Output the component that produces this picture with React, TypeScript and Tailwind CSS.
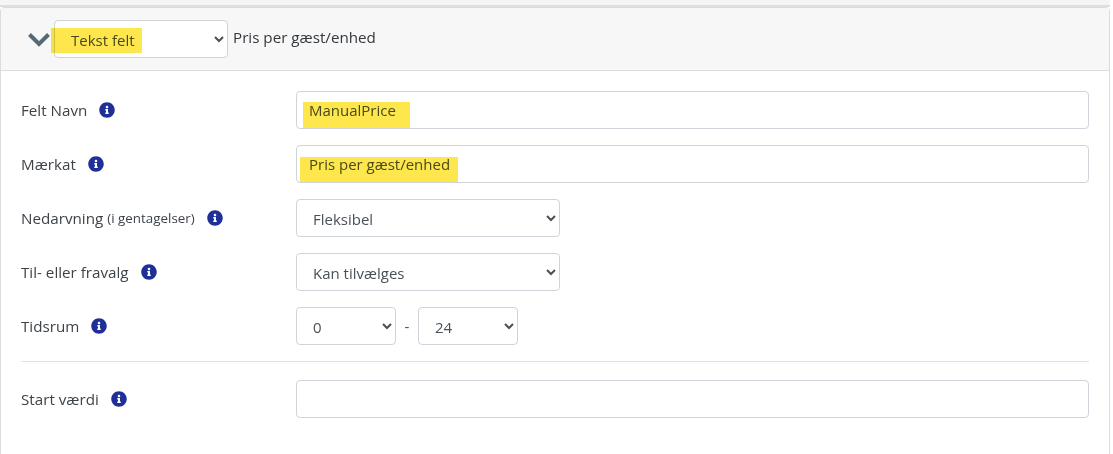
import React from "react";
import { FaInfoCircle } from "react-icons/fa";

const Info = () => <FaInfoCircle className="shrink-0 text-[#1e2f97] ml-[12px]" size={16} />;

const Mark = ({ className }: { className: string }) => (
  <span className={`absolute bg-[#fde74c] mix-blend-multiply pointer-events-none ${className}`}></span>
);

const fieldClass =
  "h-[38px] rounded border border-[#ced4da] bg-white text-[#495057] text-[15px] outline-none";

const Row = ({ label, small, children }: { label: string; small?: string; children: React.ReactNode }) => (
  <div className="flex items-center mb-4">
    <div className="w-[275px] shrink-0 flex items-center text-[15.2px] text-[#3d4349]">
      <span>{label}</span>
      {small && <span className="text-[13.4px] ml-1 mt-px">{small}</span>}
      <Info />
    </div>
    {children}
  </div>
);

export default function App() {
  return (
    <div className="relative w-[1113px] h-[454px] bg-white overflow-hidden font-['Open_Sans',sans-serif]">
      <div className="w-[1110px] h-[5px] bg-[#f5f5f5]"></div>
      <div className="w-[1110px] h-[2px] bg-[#dedede]"></div>
      <div className="w-[1110px] h-[460px] border border-[#dcdcdc] rounded-t">
        <div className="h-[63px] bg-[#f7f7f7] border-b border-[#dcdcdc] flex items-center pl-[26px]">
          <svg width="24" height="15" viewBox="0 0 24 15" fill="none" className="shrink-0 mt-[1px]">
            <path d="M2.5 2.5 L12 12 L21.5 2.5" stroke="#546a78" strokeWidth="4" />
          </svg>
          <select defaultValue="Tekst felt" className={`${fieldClass} w-[174px] ml-[3px] pl-[12px] pt-[2px] -mt-[1px]`}>
            <option>Tekst felt</option>
          </select>
          <span className="ml-[5px] text-[15.2px] text-[#33383d] -mt-[3px]">Pris per gæst/enhed</span>
        </div>
        <div className="pt-5 pl-5 pr-5">
          <Row label="Felt Navn">
            <input readOnly value="ManualPrice" className={`${fieldClass} w-[793px] px-3`} />
          </Row>
          <Row label="Mærkat">
            <input readOnly value="Pris per gæst/enhed" className={`${fieldClass} w-[793px] px-3`} />
          </Row>
          <Row label="Nedarvning" small="(i gentagelser)">
            <select className={`${fieldClass} w-[264px] pl-3 pt-[1px]`}>
              <option>Fleksibel</option>
            </select>
          </Row>
          <Row label="Til- eller fravalg">
            <select className={`${fieldClass} w-[264px] pl-3 pt-[1px]`}>
              <option>Kan tilvælges</option>
            </select>
          </Row>
          <Row label="Tidsrum">
            <div className="flex items-center">
              <select className={`${fieldClass} w-[100px] pl-3 pt-[1px]`}>
                <option>0</option>
              </select>
              <span className="w-[22px] text-center text-[15px] text-[#495057]">-</span>
              <select className={`${fieldClass} w-[100px] pl-3 pt-[1px]`}>
                <option>24</option>
              </select>
            </div>
          </Row>
          <div className="border-t border-[#e2e2e2] w-[1068px] mt-0 mb-[18px]"></div>
          <Row label="Start værdi">
            <input readOnly className={`${fieldClass} w-[793px] px-3`} />
          </Row>
        </div>
      </div>
      <Mark className="left-[51px] top-[28px] w-[91px] h-[25px]" />
      <Mark className="left-[303px] top-[102px] w-[107px] h-[26px]" />
      <Mark className="left-[300px] top-[157px] w-[158px] h-[25px]" />
    </div>
  );
}
